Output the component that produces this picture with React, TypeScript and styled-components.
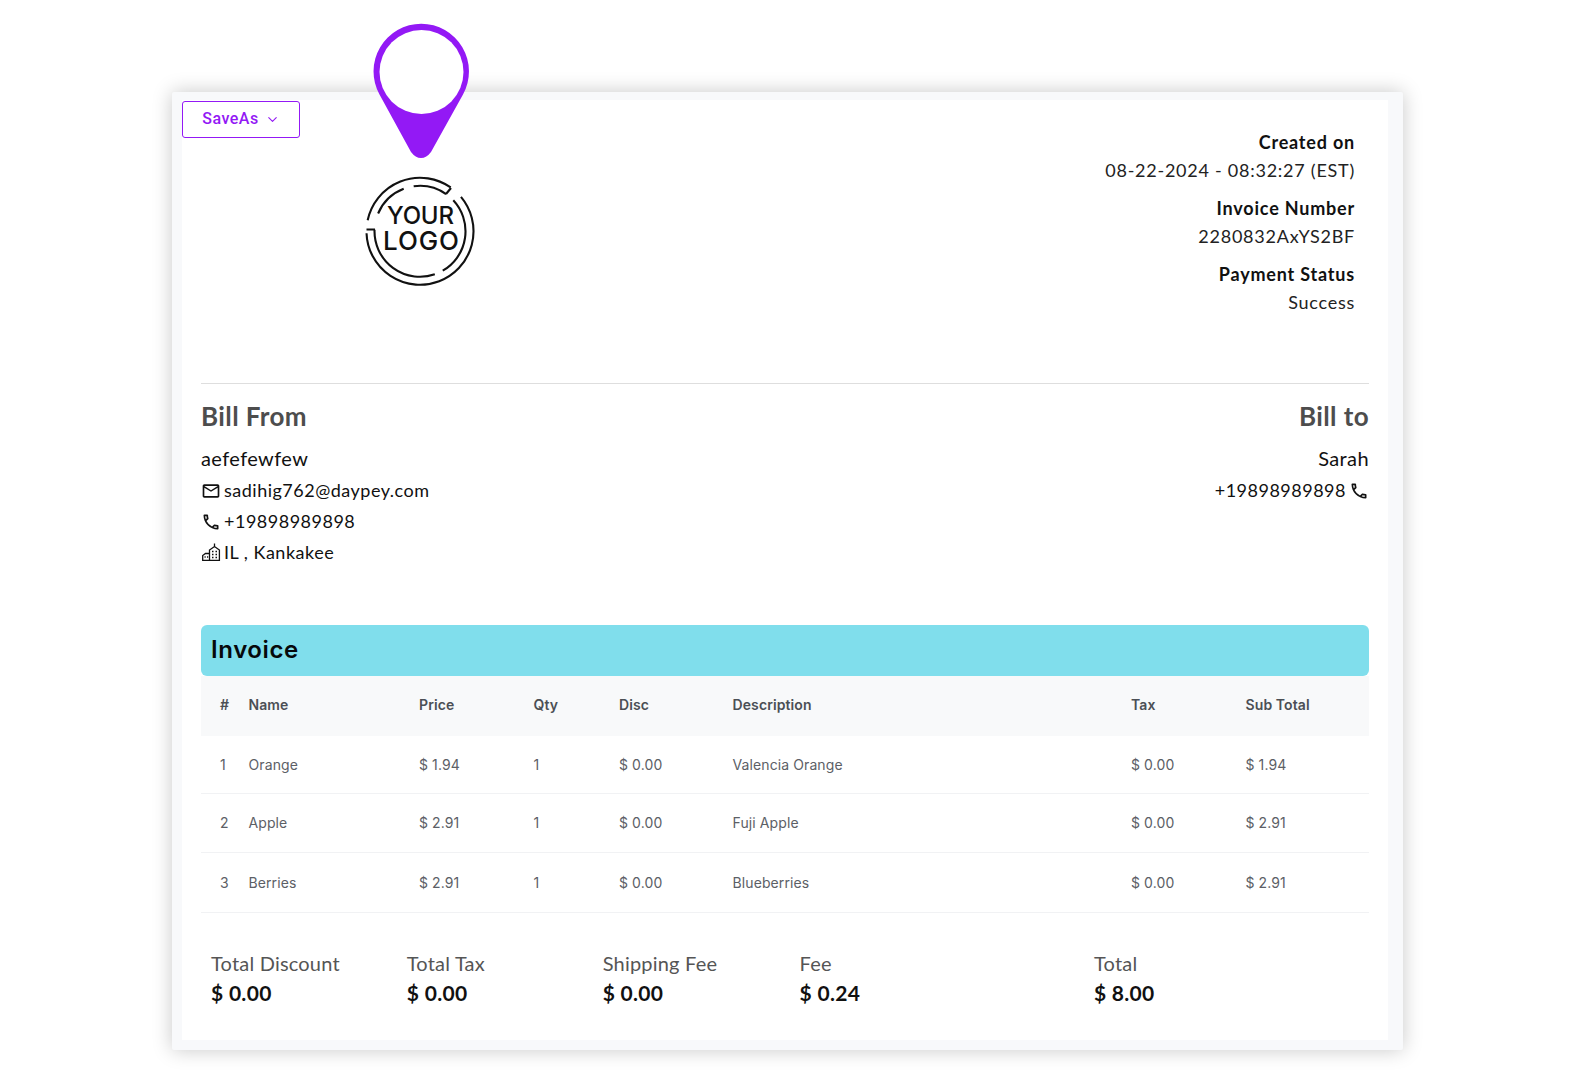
import styled, { createGlobalStyle } from 'styled-components';
import { ChevronDown } from 'lucide-react';
import { MdOutlineMailOutline, MdOutlinePhone } from 'react-icons/md';

const GlobalStyle = createGlobalStyle`
  html, body { margin: 0; padding: 0; background: #fff; }
  body { font-family: "Lato", "Roboto", sans-serif; color: #111; }
`;

const Page = styled.div`
  width: 1575px;
  height: 1080px;
  padding: 92px 172px 30px 172px;
  box-sizing: border-box;
  position: relative;
  overflow: hidden;
`;

const Sheet = styled.div`
  height: 958px;
  background: #f8f9fb;
  padding: 8px 15px 10px 10px;
  box-sizing: border-box;
  box-shadow: 0 0 20px rgba(0, 0, 0, 0.22);
  border-radius: 2px;
`;

const Inner = styled.div`
  background: #fff;
  height: 100%;
  display: flex;
  flex-direction: column;
`;

const TopBar = styled.div`
  height: 283px;
  box-sizing: border-box;
  display: flex;
  justify-content: space-between;
  align-items: flex-start;
  padding-top: 1px;
`;

const SaveButton = styled.button`
  width: 118px;
  height: 37px;
  background: #fff;
  border: 1px solid #9319f5;
  border-radius: 3px;
  color: #9319f5;
  font: 500 16px "Roboto", sans-serif;
  letter-spacing: 0.5px;
  display: flex;
  align-items: center;
  justify-content: center;
  gap: 6px;
  padding: 0 0 3px;
`;

const Meta = styled.div`
  margin: 27px 33px 0 0;
  text-align: right;
  display: flex;
  flex-direction: column;
`;

const MetaLabel = styled.div<{ $first?: boolean }>`
  font-size: 18px;
  font-weight: 700;
  line-height: 28px;
  letter-spacing: 0.8px;
  margin-top: ${({ $first }) => ($first ? '0' : '10px')};
`;

const MetaValue = styled.div`
  font-size: 18px;
  line-height: 28px;
  letter-spacing: 0.75px;
  color: #222;
`;

const Pin = styled.svg`
  position: absolute;
  left: 371px;
  top: 22px;
  width: 100px;
  height: 140px;
`;

const Logo = styled.svg`
  position: absolute;
  left: 360px;
  top: 170px;
  width: 120px;
  height: 120px;
`;

const Content = styled.div`
  margin: 0 19px;
  display: flex;
  flex-direction: column;
`;

const BillRow = styled.div`
  border-top: 1px solid #dedede;
  display: flex;
  justify-content: space-between;
  height: 242px;
  box-sizing: border-box;
  padding-top: 16px;
`;

const BillColumn = styled.div<{ $right?: boolean }>`
  display: flex;
  flex-direction: column;
  align-items: ${({ $right }) => ($right ? 'flex-end' : 'flex-start')};
`;

const BillTitle = styled.div`
  font-size: 26px;
  font-weight: 700;
  line-height: 32px;
  color: #4d4d4d;
  letter-spacing: 0.4px;
  margin-bottom: 10px;
`;

const BillName = styled.div`
  font-size: 20px;
  line-height: 33px;
  letter-spacing: 0.4px;
`;

const BillLine = styled.div`
  display: flex;
  align-items: center;
  gap: 3px;
  font-size: 18px;
  line-height: 31px;
  letter-spacing: 0.5px;
  svg { flex: none; }
`;

const InvoiceBar = styled.div`
  height: 51px;
  box-sizing: border-box;
  padding: 0 0 2px 10px;
  background: #80deec;
  border-radius: 6px;
  display: flex;
  align-items: center;
  font-family: "Inter", sans-serif;
  font-size: 24px;
  font-weight: 600;
  letter-spacing: 0.6px;
  color: #06090b;
`;

const Row = styled.div<{ $head?: boolean; $height: number }>`
  display: grid;
  grid-template-columns: 28.5px 170.5px 114.5px 85.5px 113.5px 398.5px 114.5px 1fr;
  height: ${({ $height }) => $height}px;
  align-items: center;
  box-sizing: border-box;
  padding: 0 0 ${({ $head }) => ($head ? 3 : 1)}px 19px;
  font-family: "Inter", sans-serif;
  font-size: 14px;
  letter-spacing: 0.1px;
  background: ${({ $head }) => ($head ? '#f8f9fa' : '#fff')};
  color: ${({ $head }) => ($head ? '#4b4f55' : '#5c6066')};
  font-weight: ${({ $head }) => ($head ? 600 : 400)};
  border-bottom: ${({ $head }) => ($head ? 'none' : '1px solid #f1f2f4')};
`;

const Totals = styled.div`
  display: flex;
  padding: 35px 0 0 10px;
`;

const TotalItem = styled.div<{ $width: number }>`
  width: ${({ $width }) => $width}px;
`;

const TotalLabel = styled.div`
  font-size: 20px;
  line-height: 30px;
  color: #555;
  letter-spacing: 0.2px;
`;

const TotalValue = styled.div`
  font-size: 21px;
  font-weight: 700;
  line-height: 30px;
  letter-spacing: 0.3px;
`;

const columns = ['#', 'Name', 'Price', 'Qty', 'Disc', 'Description', 'Tax', 'Sub Total'];

const rows = [
  { cells: ['1', 'Orange', '$ 1.94', '1', '$ 0.00', 'Valencia Orange', '$ 0.00', '$ 1.94'], height: 58 },
  { cells: ['2', 'Apple', '$ 2.91', '1', '$ 0.00', 'Fuji Apple', '$ 0.00', '$ 2.91'], height: 59 },
  { cells: ['3', 'Berries', '$ 2.91', '1', '$ 0.00', 'Blueberries', '$ 0.00', '$ 2.91'], height: 60 },
];

const totals = [
  { label: 'Total Discount', value: '$ 0.00', width: 195.8 },
  { label: 'Total Tax', value: '$ 0.00', width: 195.9 },
  { label: 'Shipping Fee', value: '$ 0.00', width: 196.9 },
  { label: 'Fee', value: '$ 0.24', width: 294.4 },
  { label: 'Total', value: '$ 8.00', width: 200 },
];

const polar = (r: number, deg: number) => {
  const a = ((deg - 90) * Math.PI) / 180;
  return `${(60 + r * Math.cos(a)).toFixed(2)} ${(61.3 + r * Math.sin(a)).toFixed(2)}`;
};

// arcs run clockwise, 0deg at the top
const arc = (r: number, from: number, to: number) =>
  `M${polar(r, from)}A${r} ${r} 0 ${to - from > 180 ? 1 : 0} 1 ${polar(r, to)}`;

const BuildingIcon = () => (
  <svg width="20" height="20" viewBox="-1 -1 20 20" fill="none" stroke="#111" strokeWidth="1.3" style={{ marginTop: -2 }}>
    <path d="M7.500 17.400V7L12.500 3.500 17.400 7V17.400ZM12.500 3.500V0.500M7.500 10.500H3.500L0.700 12.500V17.400H7.500" />
    <path d="M10 8.500h1.500M13.500 8.500h1.500M10 11.500h1.500M13.500 11.500h1.500M10 14.500h1.500M13.500 14.500h1.500M2.500 14h1.200M5 14h1.200" strokeWidth="1.600" />
  </svg>
);

const App = () => (
  <Page>
    <GlobalStyle />
    <Sheet>
      <Inner>
        <TopBar>
          <SaveButton>
            SaveAs <ChevronDown size={15} strokeWidth={1.75} style={{ marginTop: 3 }} />
          </SaveButton>
          <Meta>
            <MetaLabel $first>Created on</MetaLabel>
            <MetaValue>08-22-2024 - 08:32:27 (EST)</MetaValue>
            <MetaLabel>Invoice Number</MetaLabel>
            <MetaValue>2280832AxYS2BF</MetaValue>
            <MetaLabel>Payment Status</MetaLabel>
            <MetaValue>Success</MetaValue>
          </Meta>
        </TopBar>
        <Content>
          <BillRow>
            <BillColumn>
              <BillTitle>Bill From</BillTitle>
              <BillName>aefefewfew</BillName>
              <BillLine><MdOutlineMailOutline size={20} />sadihig762@daypey.com</BillLine>
              <BillLine><MdOutlinePhone size={20} />+19898989898</BillLine>
              <BillLine><BuildingIcon />IL , Kankakee</BillLine>
            </BillColumn>
            <BillColumn $right>
              <BillTitle>Bill to</BillTitle>
              <BillName>Sarah</BillName>
              <BillLine>+19898989898<MdOutlinePhone size={20} /></BillLine>
            </BillColumn>
          </BillRow>
          <InvoiceBar>Invoice</InvoiceBar>
          <Row $head $height={60}>
            {columns.map((c) => <div key={c}>{c}</div>)}
          </Row>
          {rows.map((r) => (
            <Row key={r.cells[0]} $height={r.height}>
              {r.cells.map((c, i) => <div key={i}>{c}</div>)}
            </Row>
          ))}
          <Totals>
            {totals.map((t) => (
              <TotalItem key={t.label} $width={t.width}>
                <TotalLabel>{t.label}</TotalLabel>
                <TotalValue>{t.value}</TotalValue>
              </TotalItem>
            ))}
          </Totals>
        </Content>
      </Inner>
    </Sheet>
    <Pin viewBox="371 22 100 140">
      <path d="M379.500 94.500A47.700 47.700 0 1 1 463 94.500L431 152Q426.500 158 421 158Q415.500 158 411 152Z" fill="#9319f5" />
      <circle cx="421.500" cy="72" r="42" fill="#fff" />
    </Pin>
    <Logo viewBox="0 0 120 120" fill="none" stroke="#111" strokeWidth="2.100">
      <path d={arc(53.5, 282, 395)} />
      <path d={arc(53.5, 50, 268)} />
      <path d={arc(45.5, 293, 339)} />
      <path d={arc(45.5, 352, 395)} />
      <path d={arc(45.5, 47, 150)} />
      <path d={arc(45.5, 161, 272)} />
      <path d="M6.500 59.500H15M86 24L91 18" />
      <text x="60.500" y="54" fontFamily="Inter, sans-serif" fontSize="24" fontWeight="500" fill="#111" stroke="none" textAnchor="middle" textLength="67">YOUR</text>
      <text x="61" y="79.500" fontFamily="Inter, sans-serif" fontSize="26" fontWeight="500" fill="#111" stroke="none" textAnchor="middle" textLength="76">LOGO</text>
    </Logo>
  </Page>
);

export default App;
